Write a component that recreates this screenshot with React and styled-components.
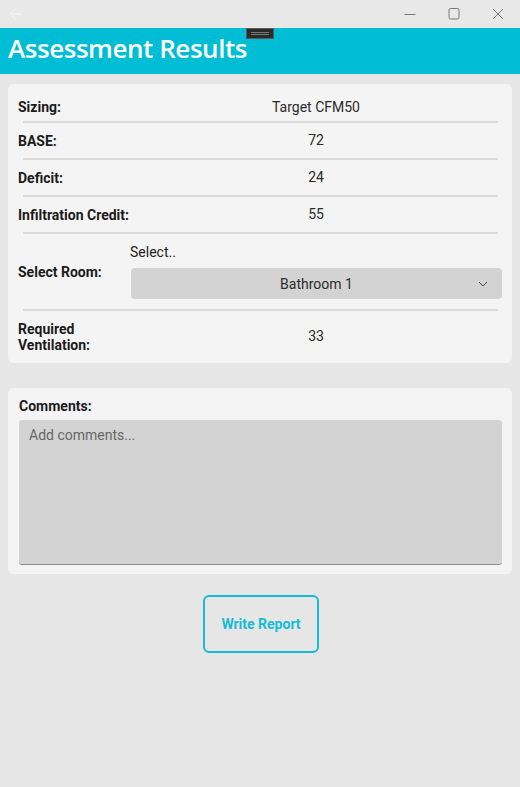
import styled, { createGlobalStyle } from "styled-components";

const GlobalStyle = createGlobalStyle`
  html, body {
    margin: 0;
    padding: 0;
    background: #e6e6e6;
  }
  body {
    font-family: Roboto, "Liberation Sans", sans-serif;
    color: #1b1b1b;
  }
`;

const rows = [
  { label: "Sizing:", value: "Target CFM50", first: true },
  { label: "BASE:", value: "72" },
  { label: "Deficit:", value: "24" },
  { label: "Infiltration Credit:", value: "55" },
];

function TitleBar() {
  return (
    <Chrome>
      <svg width="14" height="12" viewBox="0 0 14 12">
        <path d="M13 6H1.5M6.5 1L1.5 6l5 5" fill="none" stroke="#f7f7f7" strokeWidth="1" />
      </svg>
      <WindowButtons>
        <svg width="12" height="12" viewBox="0 0 12 12">
          <path d="M0.5 6.5h11" stroke="#777" strokeWidth="1" />
        </svg>
        <svg width="12" height="12" viewBox="0 0 12 12">
          <rect x="1" y="0.5" width="10" height="10.5" rx="1.5" fill="none" stroke="#777" strokeWidth="1" />
        </svg>
        <svg width="12" height="12" viewBox="0 0 12 12">
          <path d="M1 1l10 10M11 1L1 11" stroke="#777" strokeWidth="1" />
        </svg>
      </WindowButtons>
    </Chrome>
  );
}

function App() {
  return (
    <>
      <GlobalStyle />
      <Page>
        <TitleBar />
        <Header>
          <Title>Assessment Results</Title>
          <DebugBar>
            <span />
          </DebugBar>
        </Header>
        <Content>
          <Card $pad="9px 10px 1px">
            {rows.map((r) => (
              <div key={r.label}>
                <Row $first={r.first}>
                  <Label>{r.label}</Label>
                  <Value>{r.value}</Value>
                </Row>
                <Divider />
              </div>
            ))}
            <SelectRow>
              <Label>Select Room:</Label>
              <SelectCol>
                <Hint>Select..</Hint>
                <Dropdown>
                  <span>Bathroom 1</span>
                  <Chevron width="10" height="6" viewBox="0 0 10 6">
                    <path d="M1 1l4 4 4-4" fill="none" stroke="#444" strokeWidth="1" />
                  </Chevron>
                </Dropdown>
              </SelectCol>
            </SelectRow>
            <Divider />
            <Row $last>
              <Label>
                Required
                <br />
                Ventilation:
              </Label>
              <Value>33</Value>
            </Row>
          </Card>
          <Card $pad="10px 10px 9px 11px">
            <Label>Comments:</Label>
            <Comments placeholder="Add comments..." />
          </Card>
          <ButtonWrap>
            <ReportButton type="button">Write Report</ReportButton>
          </ButtonWrap>
        </Content>
      </Page>
    </>
  );
}

export default App;

const Page = styled.div`
  min-height: 787px;
  background: #e6e6e6;
`;

const Chrome = styled.div`
  height: 27px;
  display: flex;
  align-items: center;
  justify-content: space-between;
  padding-left: 9px;
  background: #e8e8e8;
  border-bottom: 1px solid #f0e4e4;
`;

const WindowButtons = styled.div`
  display: flex;
  align-items: center;
  gap: 32px;
  padding-right: 16px;
`;

const Header = styled.div`
  position: relative;
  height: 46px;
  box-sizing: border-box;
  background: #00bdd6;
  display: flex;
  align-items: center;
  padding: 0 0 6px 8px;
`;

const Title = styled.h1`
  margin: 0;
  font-family: "Open Sans", "Noto Sans", sans-serif;
  font-weight: 600;
  font-size: 26px;
  color: #ffffff;
  letter-spacing: -0.45px;
`;

const DebugBar = styled.div`
  position: absolute;
  left: 246px;
  top: 0;
  width: 28px;
  height: 11px;
  box-sizing: border-box;
  background: #2a2a2a;
  border: 1px solid #5a5a5a;
  display: flex;
  align-items: center;
  justify-content: center;

  span {
    width: 18px;
    height: 3px;
    border-top: 1px solid #777;
    border-bottom: 1px solid #777;
    box-sizing: border-box;
  }
`;

const Content = styled.div`
  padding: 10px 8px;
  display: flex;
  flex-direction: column;
  gap: 25px;
`;

const Card = styled.div`
  background: #f4f4f4;
  border-radius: 6px;
  padding: ${(p) => p.$pad};
  display: flex;
  flex-direction: column;
`;

const Row = styled.div`
  display: grid;
  grid-template-columns: 112px 1fr;
  align-items: center;
  min-height: ${(p) => (p.$first ? "28px" : "35px")};
  padding: ${(p) => (p.$last ? "8px 0" : "0")};
`;

const Label = styled.div`
  font-size: 14px;
  font-weight: 700;
  line-height: 16px;
  color: #1b1b1b;
`;

const Value = styled.div`
  font-size: 14px;
  line-height: 17px;
  text-align: center;
  color: #2b2b2b;
`;

const Divider = styled.div`
  height: 2px;
  margin: 0 4px 0 5px;
  background: #dadada;
`;

const SelectRow = styled.div`
  display: grid;
  grid-template-columns: 112px 1fr;
  align-items: center;
  padding: 10px 0 10px;
`;

const SelectCol = styled.div`
  display: flex;
  flex-direction: column;
  gap: 8px;
`;

const Hint = styled.div`
  font-size: 14px;
  line-height: 16px;
  color: #222;
`;

const Dropdown = styled.div`
  position: relative;
  height: 31px;
  margin-left: 1px;
  border-radius: 4px;
  background: #d3d3d3;
  display: flex;
  align-items: center;
  justify-content: center;
  font-size: 14px;
  color: #2b2b2b;
`;

const Chevron = styled.svg`
  position: absolute;
  right: 14px;
  top: 13px;
`;

const Comments = styled.textarea`
  margin-top: 6px;
  height: 145px;
  box-sizing: border-box;
  resize: none;
  border: none;
  border-bottom: 1px solid #8a8a8a;
  border-radius: 3px;
  background: #d3d3d3;
  padding: 7px 10px;
  font-family: Roboto, "Liberation Sans", sans-serif;
  font-size: 14px;
  outline: none;

  &::placeholder {
    color: #666;
  }
`;

const ButtonWrap = styled.div`
  display: flex;
  justify-content: center;
  margin-top: -4px;
`;

const ReportButton = styled.button`
  width: 116px;
  height: 58px;
  margin-left: 2px;
  background: transparent;
  border: 2px solid #16bcd6;
  border-radius: 6px;
  color: #16bcd6;
  font-family: Roboto, "Liberation Sans", sans-serif;
  font-size: 14px;
  font-weight: 700;
  cursor: pointer;
`;
